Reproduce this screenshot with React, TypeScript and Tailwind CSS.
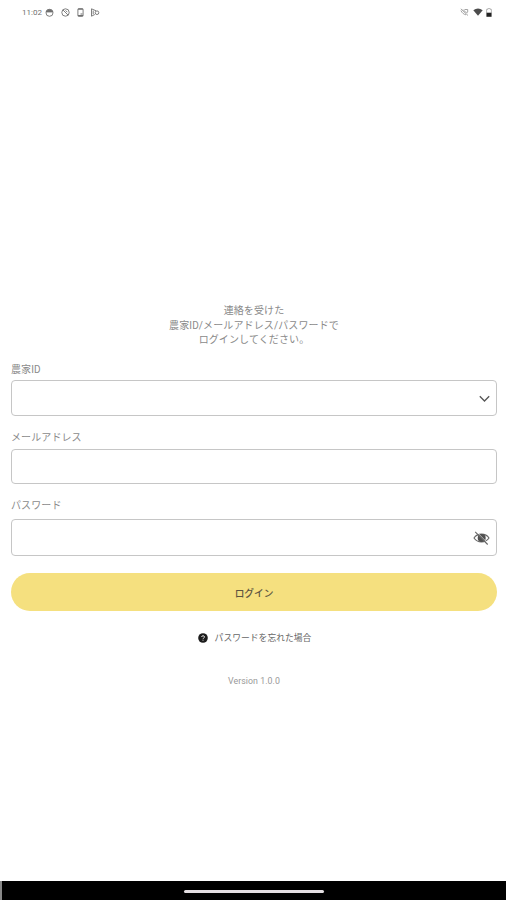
import { ReactNode, useState } from "react";

function StatusBar() {
    return (
        <div className="flex h-6 items-center justify-between pl-[22px] pr-[14px] text-[#707070]">
            <div className="flex items-center">
                <span className="w-[23px] pt-px text-[8px] leading-none">11:02</span>
                <svg className="h-[9px] w-[9px]" viewBox="0 0 9 9" fill="none" stroke="currentColor">
                    <circle cx="4.5" cy="4.8" r="3.5" strokeWidth="0.9" />
                    <path d="M1.2 3.9C1.7 0.9 7.3 0.9 7.8 3.9Z" fill="currentColor" />
                </svg>
                <svg className="ml-[7px] h-[9px] w-[9px]" viewBox="0 0 9 9" fill="none" stroke="currentColor" strokeWidth="0.9">
                    <circle cx="4.5" cy="4.5" r="3.7" />
                    <path d="M2 2L7 7M4.5 2.4L6.3 4.2" />
                </svg>
                <svg className="ml-[7px] h-[9px] w-[7px]" viewBox="0 0 7 9" fill="none" stroke="currentColor">
                    <rect x="0.9" y="0.6" width="5.2" height="7.8" rx="0.7" strokeWidth="0.9" />
                    <path d="M1 1.2H6M1 7.5H6M3.5 6H5.5" strokeWidth="1.1" />
                </svg>
                <svg className="ml-[6px] h-[9px] w-[10px]" viewBox="0 0 10 9" fill="none" stroke="currentColor" strokeWidth="0.9">
                    <path d="M1.5 0.8V8.2L4.8 6.5M1.5 0.8L6 2.8" />
                    <path d="M3.2 2.6V6.3" />
                    <circle cx="7" cy="4.7" r="1.8" />
                </svg>
            </div>
            <div className="flex items-center">
                <svg className="h-[8px] w-[9px]" viewBox="0 0 9 8" fill="none" stroke="#999" strokeWidth="0.9">
                    <path d="M0.8 0.8L8 7.5M0.9 2.5C2 5 4 6.5 6 6.8M3 1.5C4.5 3.5 6 4.5 7.7 4.7M4.5 1.5H7.7V4" />
                </svg>
                <svg className="ml-[4px] h-[8px] w-[10px]" viewBox="0 0 10 8" fill="#4c4c4c">
                    <path d="M0.3 2.2Q5 -1.2 9.7 2.2L5 7.8Z" />
                </svg>
                <svg className="ml-[3px] h-[9px] w-[6px]" viewBox="0 0 6 9">
                    <path d="M2 0.3H4V1.3H5.4V8.6H0.6V1.3H2Z" fill="#fff" stroke="#999" strokeWidth="0.7" />
                    <rect x="0.6" y="4.7" width="4.8" height="4" fill="#222" />
                </svg>
            </div>
        </div>
    );
}

function Field({ label, type = "text", className, children }: { label: string, type?: string, className: string, children?: ReactNode }) {
    const [value, setValue] = useState("");

    return (
        <label className="flex flex-col">
            <span className="h-[15px] pt-px text-[10px] leading-[15px] tracking-[0.1px]">{label}</span>
            <div className={`flex items-center rounded-[4px] border border-[#c6c6c6] bg-white ${className}`}>
                <input
                    type={type}
                    value={value}
                    onChange={(e) => setValue(e.target.value)}
                    className="h-full min-w-0 flex-1 px-2 outline-none"
                />
                {children}
            </div>
        </label>
    );
}

export default function App() {
    const [visible, setVisible] = useState(false);

    return (
        <div className="flex h-[900px] w-full flex-col bg-white font-['Roboto','Noto_Sans_CJK_JP',sans-serif] text-[#8a8a8a]">
            <StatusBar />
            <main className="flex flex-1 flex-col pl-[11px] pr-[9px] pt-[280px]">
                <p className="text-center text-[10px] leading-[14.5px] tracking-[0.12px]">
                    連絡を受けた<br />
                    農家ID/メールアドレス/パスワードで<br />
                    ログインしてください。
                </p>
                <form className="mt-[13.5px] flex flex-col" onSubmit={(e) => e.preventDefault()}>
                    <Field label="農家ID" className="mt-[4px] h-[36px]">
                        <svg className="mr-[6px] mt-px h-[8px] w-[11px]" viewBox="0 0 11 8" fill="none" stroke="#555" strokeWidth="1.3">
                            <path d="M0.8 1.2L5.5 6L10.2 1.2" />
                        </svg>
                    </Field>
                    <div className="mt-[13px]">
                        <Field label="メールアドレス" className="mt-[5px] h-[35px]" />
                    </div>
                    <div className="mt-[13px]">
                        <Field label="パスワード" type={visible ? "text" : "password"} className="mt-[7px] h-[37px]">
                            <button type="button" className="mr-[6px]" onClick={() => setVisible(!visible)}>
                                <svg className="h-[14px] w-[17px]" viewBox="0 0 17 14" fill="none" stroke="#666">
                                    <path d="M1 7C4.3 1.8 12.7 1.8 16 7C12.7 12.2 4.3 12.2 1 7Z" strokeWidth="1.1" />
                                    <circle cx="8.7" cy="7" r="4" fill="#505050" stroke="none" />
                                    <path d="M3 0.3L15.5 13" stroke="#fff" strokeWidth="0.7" />
                                    <path d="M2.2 0.8L14.7 13.5" strokeWidth="1.1" />
                                </svg>
                            </button>
                        </Field>
                    </div>
                    <button className="mt-[17px] h-[38px] rounded-full bg-[#f5e07f] pt-[5px] text-[9.7px] font-medium text-[#5c543f]">ログイン</button>
                </form>
                <a className="mt-[20px] flex h-[14px] items-center justify-center pl-px text-[8.8px] text-[#666]">
                    <svg className="mr-[7px] h-[10px] w-[10px]" viewBox="0 0 10 10">
                        <circle cx="5" cy="5" r="4.8" fill="#1c1c1c" />
                        <path d="M3.6 4C3.6 2.3 6.5 2.3 6.5 4C6.5 5 5 5 5 6.1M5 6.8V7.7" fill="none" stroke="#ddd" strokeWidth="1" />
                    </svg>
                    <span className="pt-[2px]">パスワードを忘れた場合</span>
                </a>
                <p className="mt-[29px] text-center text-[8.8px] leading-[14px] tracking-[0.05px] text-[#999]">Version 1.0.0</p>
            </main>
            <div className="flex h-[19px] items-center justify-center border-l-2 border-[#888] bg-black pt-[2px]">
                <div className="h-[3px] w-[140px] rounded-full bg-[#e4dfe2]" />
            </div>
        </div>
    );
}
